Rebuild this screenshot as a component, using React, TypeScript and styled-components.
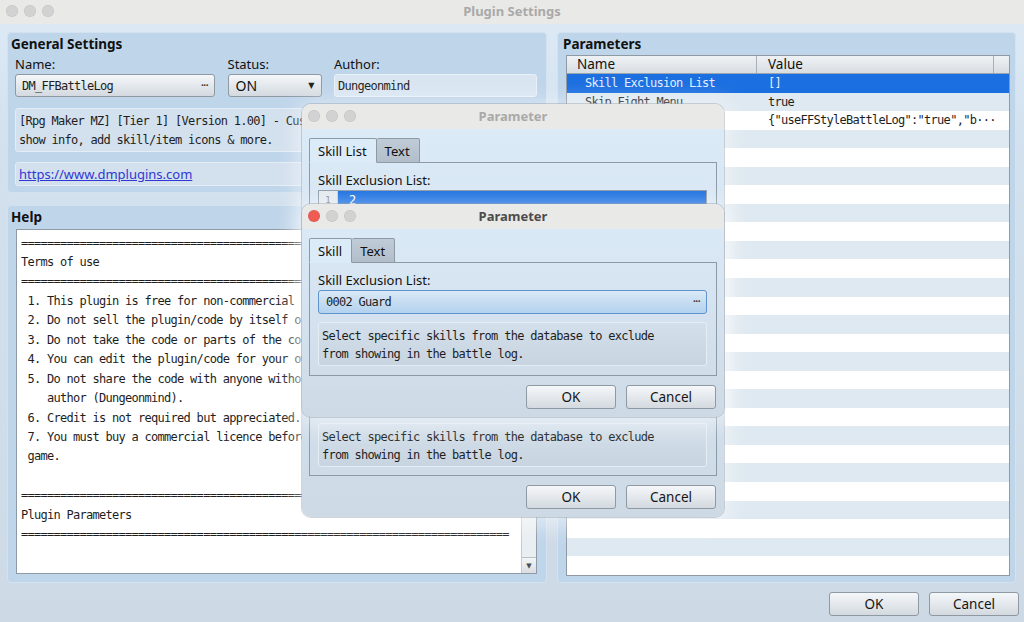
import React from "react";
import styled, { createGlobalStyle, css } from "styled-components";

const MONO = `"DejaVu Sans Mono", "Liberation Mono", monospace`;
const SANS = `"Noto Sans", "Open Sans", sans-serif`;

const GlobalStyle = createGlobalStyle`
  html, body { margin: 0; padding: 0; }
  body { width: 1024px; height: 622px; overflow: hidden; font-family: ${SANS}; }
  * { box-sizing: border-box; }
`;

const monoText = css`
  font-family: ${MONO};
  font-size: 12px;
  letter-spacing: -0.72px;
  color: #1e1e1e;
`;

const buttonFace = css`
  background: linear-gradient(#f5f7f9 0%, #e6eaee 45%, #d3d9df 100%);
  border: 1px solid #8f99a2;
  border-radius: 3px;
`;

const Window = styled.div`
  position: relative;
  width: 1024px;
  height: 622px;
  display: flex;
  flex-direction: column;
  background: linear-gradient(#deebf7 0px, #d3e1ee 140px, #cddae6 100%);
  overflow: hidden;
`;

const TitleBar = styled.div<{ $h: number }>`
  flex: none;
  height: ${(p) => p.$h}px;
  display: grid;
  grid-template-columns: 1fr auto 1fr;
  align-items: center;
  padding: 0 6px 2px 6px;
  background: #e9e9e7;
`;

const Lights = styled.div`
  display: flex;
  gap: 6px;
`;

const Light = styled.span<{ $color?: string }>`
  width: 12px;
  height: 12px;
  border-radius: 50%;
  background: ${(p) => p.$color ?? "#d2d2d2"};
  box-shadow: inset 0 0 0 0.5px rgba(0, 0, 0, 0.08);
`;

const TitleText = styled.div<{ $active?: boolean }>`
  font: 700 13px ${SANS};
  color: ${(p) => (p.$active ? "#4c4c4c" : "#a9a9a9")};
`;

const Main = styled.div`
  flex: 1;
  display: grid;
  grid-template-columns: 540px 459px;
  column-gap: 10px;
  padding: 8px 0 0 7px;
  min-height: 0;
`;

const Column = styled.div`
  display: flex;
  flex-direction: column;
  gap: 12px;
  min-height: 0;
`;

const Panel = styled.section<{ $grow?: boolean }>`
  display: flex;
  flex-direction: column;
  background: #bfd5ea;
  border: 1px solid #d3e2f0;
  border-radius: 4px;
  min-height: 0;
  ${(p) => (p.$grow ? "flex: 1;" : "flex: none;")}
`;

const PanelHeading = styled.h2<{ $pad?: number }>`
  margin: 0;
  padding: 2px 0 0 ${(p) => p.$pad ?? 3}px;
  height: 20px;
  font: 700 13.5px/18px ${SANS};
  color: #111;
`;

const GeneralBody = styled.div`
  display: flex;
  flex-direction: column;
  padding: 3px 9px 6px 7px;
`;

const FieldGrid = styled.div`
  display: grid;
  grid-template-columns: 200px 94px 1fr;
  column-gap: 12.5px;
`;

const Field = styled.div`
  display: flex;
  flex-direction: column;
  gap: 2px;
`;

const Label = styled.label`
  font: 13px/16px ${SANS};
  color: #111;
  height: 16px;
  white-space: nowrap;
`;

const PickButton = styled.div`
  ${buttonFace};
  height: 23px;
  display: flex;
  align-items: center;
  justify-content: space-between;
  padding: 0 6px 0 6px;
`;

const MonoValue = styled.span`
  ${monoText};
  white-space: pre;
`;

const Dots = styled.span`
  font: 700 10px ${SANS};
  letter-spacing: -0.5px;
  color: #333;
  padding-bottom: 2px;
`;

const SelectValue = styled.span`
  font: 14px ${SANS};
  color: #111;
  padding-left: 1px;
`;

const Caret = styled.span`
  font: 8px "DejaVu Sans", sans-serif;
  color: #222;
`;

const TextInput = styled.div`
  height: 23px;
  display: flex;
  align-items: center;
  padding-left: 3px;
  background: #d9e6f2;
  border: 1px solid #e8f0f8;
  border-radius: 3px;
`;

const InfoBox = styled.div<{ $h: number; $mt: number }>`
  ${monoText};
  height: ${(p) => p.$h}px;
  margin-top: ${(p) => p.$mt}px;
  padding: 3px 3px 0 3px;
  line-height: 18.5px;
  white-space: pre;
  overflow: hidden;
  background: #d3e0ed;
  border: 1px solid #e4edf6;
  border-radius: 3px;
`;

const UrlBox = styled.div`
  height: 24px;
  margin-top: 10px;
  display: flex;
  align-items: center;
  padding-left: 3px;
  background: #d3e0ed;
  border: 1px solid #e4edf6;
  border-radius: 3px;
`;

const Link = styled.a`
  font: 13px ${SANS};
  color: #3037d4;
  text-decoration: underline;
`;

const HelpBody = styled.div`
  flex: 1;
  display: flex;
  padding: 3px 9px 8px 8px;
  min-height: 0;
`;

const HelpArea = styled.div`
  flex: 1;
  display: flex;
  background: #fff;
  border: 1px solid #8e9aa5;
  min-height: 0;
  overflow: hidden;
`;

const HelpText = styled.pre`
  ${monoText};
  flex: 1;
  margin: 0;
  padding: 3.5px 0 0 4px;
  line-height: 19.45px;
  white-space: pre;
  overflow: hidden;
`;

const ScrollTrack = styled.div`
  flex: none;
  width: 15px;
  display: flex;
  flex-direction: column;
  justify-content: flex-end;
  background: #e9eef2;
  border-left: 1px solid #c3cbd2;
`;

const ScrollArrow = styled.div`
  height: 16px;
  display: flex;
  align-items: center;
  justify-content: center;
  font: 7px "DejaVu Sans", sans-serif;
  color: #4a4f55;
  background: linear-gradient(#f3f5f7, #d9dee3);
  border-top: 1px solid #b9c1c8;
`;

const ParamsBody = styled.div`
  flex: 1;
  display: flex;
  padding: 2px 5px 6px 8px;
  min-height: 0;
`;

const Table = styled.div`
  flex: 1;
  display: flex;
  flex-direction: column;
  background: #fff;
  border: 1px solid #8f9aa4;
  overflow: hidden;
`;

const HeaderRow = styled.div`
  flex: none;
  display: grid;
  grid-template-columns: 190px 1fr 15px;
  height: 18px;
  background: linear-gradient(#eff2f5, #d8dde2);
  border-bottom: 1px solid #9aa4ad;
`;

const HeaderCell = styled.div<{ $pad: number }>`
  font: 13.5px/17px ${SANS};
  color: #111;
  padding-left: ${(p) => p.$pad}px;
  border-right: 1px solid #a7b0b8;
  &:last-child {
    border-right: none;
  }
`;

const Row = styled.div<{ $kind: "sel" | "alt" | "plain" }>`
  flex: none;
  display: grid;
  grid-template-columns: 190px 1fr;
  height: 18.55px;
  align-items: center;
  background: ${(p) =>
    p.$kind === "sel" ? "#1c6fe0" : p.$kind === "alt" ? "#dfe9f1" : "#ffffff"};
`;

const Cell = styled.div<{ $pad: number; $sel?: boolean }>`
  ${monoText};
  color: ${(p) => (p.$sel ? "#e4eeff" : "#1e1e1e")};
  padding-left: ${(p) => p.$pad}px;
  white-space: pre;
  overflow: hidden;
`;

const Footer = styled.div`
  flex: none;
  height: 39px;
  display: flex;
  justify-content: flex-end;
  align-items: flex-start;
  gap: 10px;
  padding: 9px 5px 0 0;
`;

const Button = styled.button`
  ${buttonFace};
  width: 90px;
  height: 24px;
  padding: 0;
  font: 13.5px ${SANS};
  color: #151515;
`;

const Dialog = styled.div<{ $top: number; $h: number }>`
  position: absolute;
  left: 302px;
  top: ${(p) => p.$top}px;
  width: 422px;
  height: ${(p) => p.$h}px;
  display: flex;
  flex-direction: column;
  border-radius: 9px;
  overflow: hidden;
  background: linear-gradient(#dcebf8 0%, #d4e2ef 55%, #cddae6 100%);
  box-shadow: 0 0 0 1px rgba(150, 160, 170, 0.45), 0 4px 22px 4px rgba(255, 255, 255, 0.55);
`;

const DialogBody = styled.div`
  flex: 1;
  display: flex;
  flex-direction: column;
  padding: 9px 7px 8px 7px;
  min-height: 0;
`;

const Tabs = styled.div`
  flex: none;
  display: flex;
  height: 25px;
  position: relative;
  z-index: 1;
  margin-bottom: -1px;
`;

const Tab = styled.div<{ $active?: boolean }>`
  height: 25px;
  padding: 0 9px 0 8px;
  display: flex;
  align-items: center;
  font: 13px ${SANS};
  color: #111;
  border: 1px solid #8d9aa6;
  border-radius: 2px 2px 0 0;
  ${(p) =>
    p.$active
      ? css`
          background: #dcebf8;
          border-bottom-color: #dcebf8;
        `
      : css`
          background: linear-gradient(#bfcbd6, #b2bfcb);
          border-left: none;
        `}
`;

const TabPanel = styled.div`
  flex: 1;
  display: flex;
  flex-direction: column;
  padding: 9px 9px 8px 8px;
  border: 1px solid #8d9aa6;
  min-height: 0;
`;

const ListBox = styled.div`
  flex: 1;
  margin-top: 2px;
  background: #fff;
  border: 1px solid #8e9aa5;
  display: flex;
  flex-direction: column;
  overflow: hidden;
`;

const ListRow = styled.div`
  display: grid;
  grid-template-columns: 19px 1fr;
  height: 19px;
`;

const Gutter = styled.div`
  font: 9px/19px ${MONO};
  color: #7a848d;
  text-align: center;
  background: #e3e9ee;
  border-right: 1px solid #c7ced5;
`;

const ListCell = styled.div`
  ${monoText};
  color: #fff;
  line-height: 19px;
  padding-left: 11px;
  background: #1b6fe0;
`;

const PickerInput = styled.div`
  flex: none;
  margin-top: 2px;
  height: 24px;
  display: flex;
  align-items: center;
  justify-content: space-between;
  padding: 0 6px 0 7px;
  background: linear-gradient(#dbe9f6 0%, #c6ddf2 50%, #b2d2ef 100%);
  border: 1px solid #5f93cc;
  border-radius: 3px;
`;

const DialogInfo = styled.div`
  ${monoText};
  flex: none;
  height: 44px;
  margin-top: 8px;
  padding: 3.5px 3px 0 3px;
  line-height: 18.5px;
  white-space: pre;
  background: linear-gradient(#d3dfea, #c8d5e1);
  border: 1px solid #e4ecf4;
  border-radius: 3px;
`;

const DialogButtons = styled.div`
  flex: none;
  display: flex;
  justify-content: flex-end;
  gap: 10px;
  margin-top: 9px;
  padding-right: 1px;
`;

const EQ = "=".repeat(75);
const HELP_LINES = [
  EQ,
  "Terms of use",
  EQ,
  " 1. This plugin is free for non-commercial use.",
  " 2. Do not sell the plugin/code by itself or in a bundle.",
  " 3. Do not take the code or parts of the code for your own work.",
  " 4. You can edit the plugin/code for your own use.",
  " 5. Do not share the code with anyone without permission from the",
  "    author (Dungeonmind).",
  " 6. Credit is not required but appreciated.",
  " 7. You must buy a commercial licence before using it in a commercial",
  " game.",
  "",
  EQ,
  "Plugin Parameters",
  EQ,
];

const PARAM_ROWS: [string, string][] = [
  ["Skill Exclusion List", "[]"],
  ["Skip Fight Menu", "true"],
  ["", '{"useFFStyleBattleLog":"true","b\u00b7\u00b7\u00b7'],
];

const HELP_DESC =
  "Select specific skills from the database to exclude\nfrom showing in the battle log.";

function ParameterDialog(props: {
  top: number;
  h: number;
  active?: boolean;
  tab: string;
  children: React.ReactNode;
}) {
  return (
    <Dialog $top={props.top} $h={props.h}>
      <TitleBar $h={25}>
        <Lights>
          <Light $color={props.active ? "#ee5c54" : undefined} />
          <Light />
          <Light />
        </Lights>
        <TitleText $active={props.active}>Parameter</TitleText>
        <span />
      </TitleBar>
      <DialogBody>
        <Tabs>
          <Tab $active>{props.tab}</Tab>
          <Tab>Text</Tab>
        </Tabs>
        <TabPanel>
          <Label>Skill Exclusion List:</Label>
          {props.children}
          <DialogInfo>{HELP_DESC}</DialogInfo>
        </TabPanel>
        <DialogButtons>
          <Button>OK</Button>
          <Button>Cancel</Button>
        </DialogButtons>
      </DialogBody>
    </Dialog>
  );
}

export default function App() {
  const rows = Array.from({ length: 27 }, (_, i) => PARAM_ROWS[i] ?? ["", ""]);
  return (
    <>
      <GlobalStyle />
      <Window>
        <TitleBar $h={24}>
          <Lights>
            <Light />
            <Light />
            <Light />
          </Lights>
          <TitleText>Plugin Settings</TitleText>
          <span />
        </TitleBar>

        <Main>
          <Column>
            <Panel>
              <PanelHeading>General Settings</PanelHeading>
              <GeneralBody>
                <FieldGrid>
                  <Field>
                    <Label>Name:</Label>
                    <PickButton>
                      <MonoValue>DM_FFBattleLog</MonoValue>
                      <Dots>···</Dots>
                    </PickButton>
                  </Field>
                  <Field>
                    <Label>Status:</Label>
                    <PickButton>
                      <SelectValue>ON</SelectValue>
                      <Caret>▼</Caret>
                    </PickButton>
                  </Field>
                  <Field>
                    <Label>Author:</Label>
                    <TextInput>
                      <MonoValue>Dungeonmind</MonoValue>
                    </TextInput>
                  </Field>
                </FieldGrid>
                <InfoBox $h={44} $mt={11}>
                  {"[Rpg Maker MZ] [Tier 1] [Version 1.00] - Customize the battle log to\nshow info, add skill/item icons & more."}
                </InfoBox>
                <UrlBox>
                  <Link href="#">https://www.dmplugins.com</Link>
                </UrlBox>
              </GeneralBody>
            </Panel>

            <Panel $grow>
              <PanelHeading>Help</PanelHeading>
              <HelpBody>
                <HelpArea>
                  <HelpText>{HELP_LINES.join("\n")}</HelpText>
                  <ScrollTrack>
                    <ScrollArrow>▼</ScrollArrow>
                  </ScrollTrack>
                </HelpArea>
              </HelpBody>
            </Panel>
          </Column>

          <Panel $grow>
            <PanelHeading $pad={5}>Parameters</PanelHeading>
            <ParamsBody>
              <Table>
                <HeaderRow>
                  <HeaderCell $pad={10}>Name</HeaderCell>
                  <HeaderCell $pad={11}>Value</HeaderCell>
                  <HeaderCell $pad={0} />
                </HeaderRow>
                {rows.map(([n, v], i) => (
                  <Row key={i} $kind={i === 0 ? "sel" : i % 2 === 1 ? "alt" : "plain"}>
                    <Cell $pad={18} $sel={i === 0}>{n}</Cell>
                    <Cell $pad={11} $sel={i === 0}>{v}</Cell>
                  </Row>
                ))}
              </Table>
            </ParamsBody>
          </Panel>
        </Main>

        <Footer>
          <Button>OK</Button>
          <Button>Cancel</Button>
        </Footer>

        <ParameterDialog top={104} h={413} tab="Skill List">
          <ListBox>
            <ListRow>
              <Gutter>1</Gutter>
              <ListCell>2</ListCell>
            </ListRow>
          </ListBox>
        </ParameterDialog>

        <ParameterDialog top={204} h={213} tab="Skill" active>
          <PickerInput>
            <MonoValue>0002 Guard</MonoValue>
            <Dots>···</Dots>
          </PickerInput>
        </ParameterDialog>
      </Window>
    </>
  );
}
